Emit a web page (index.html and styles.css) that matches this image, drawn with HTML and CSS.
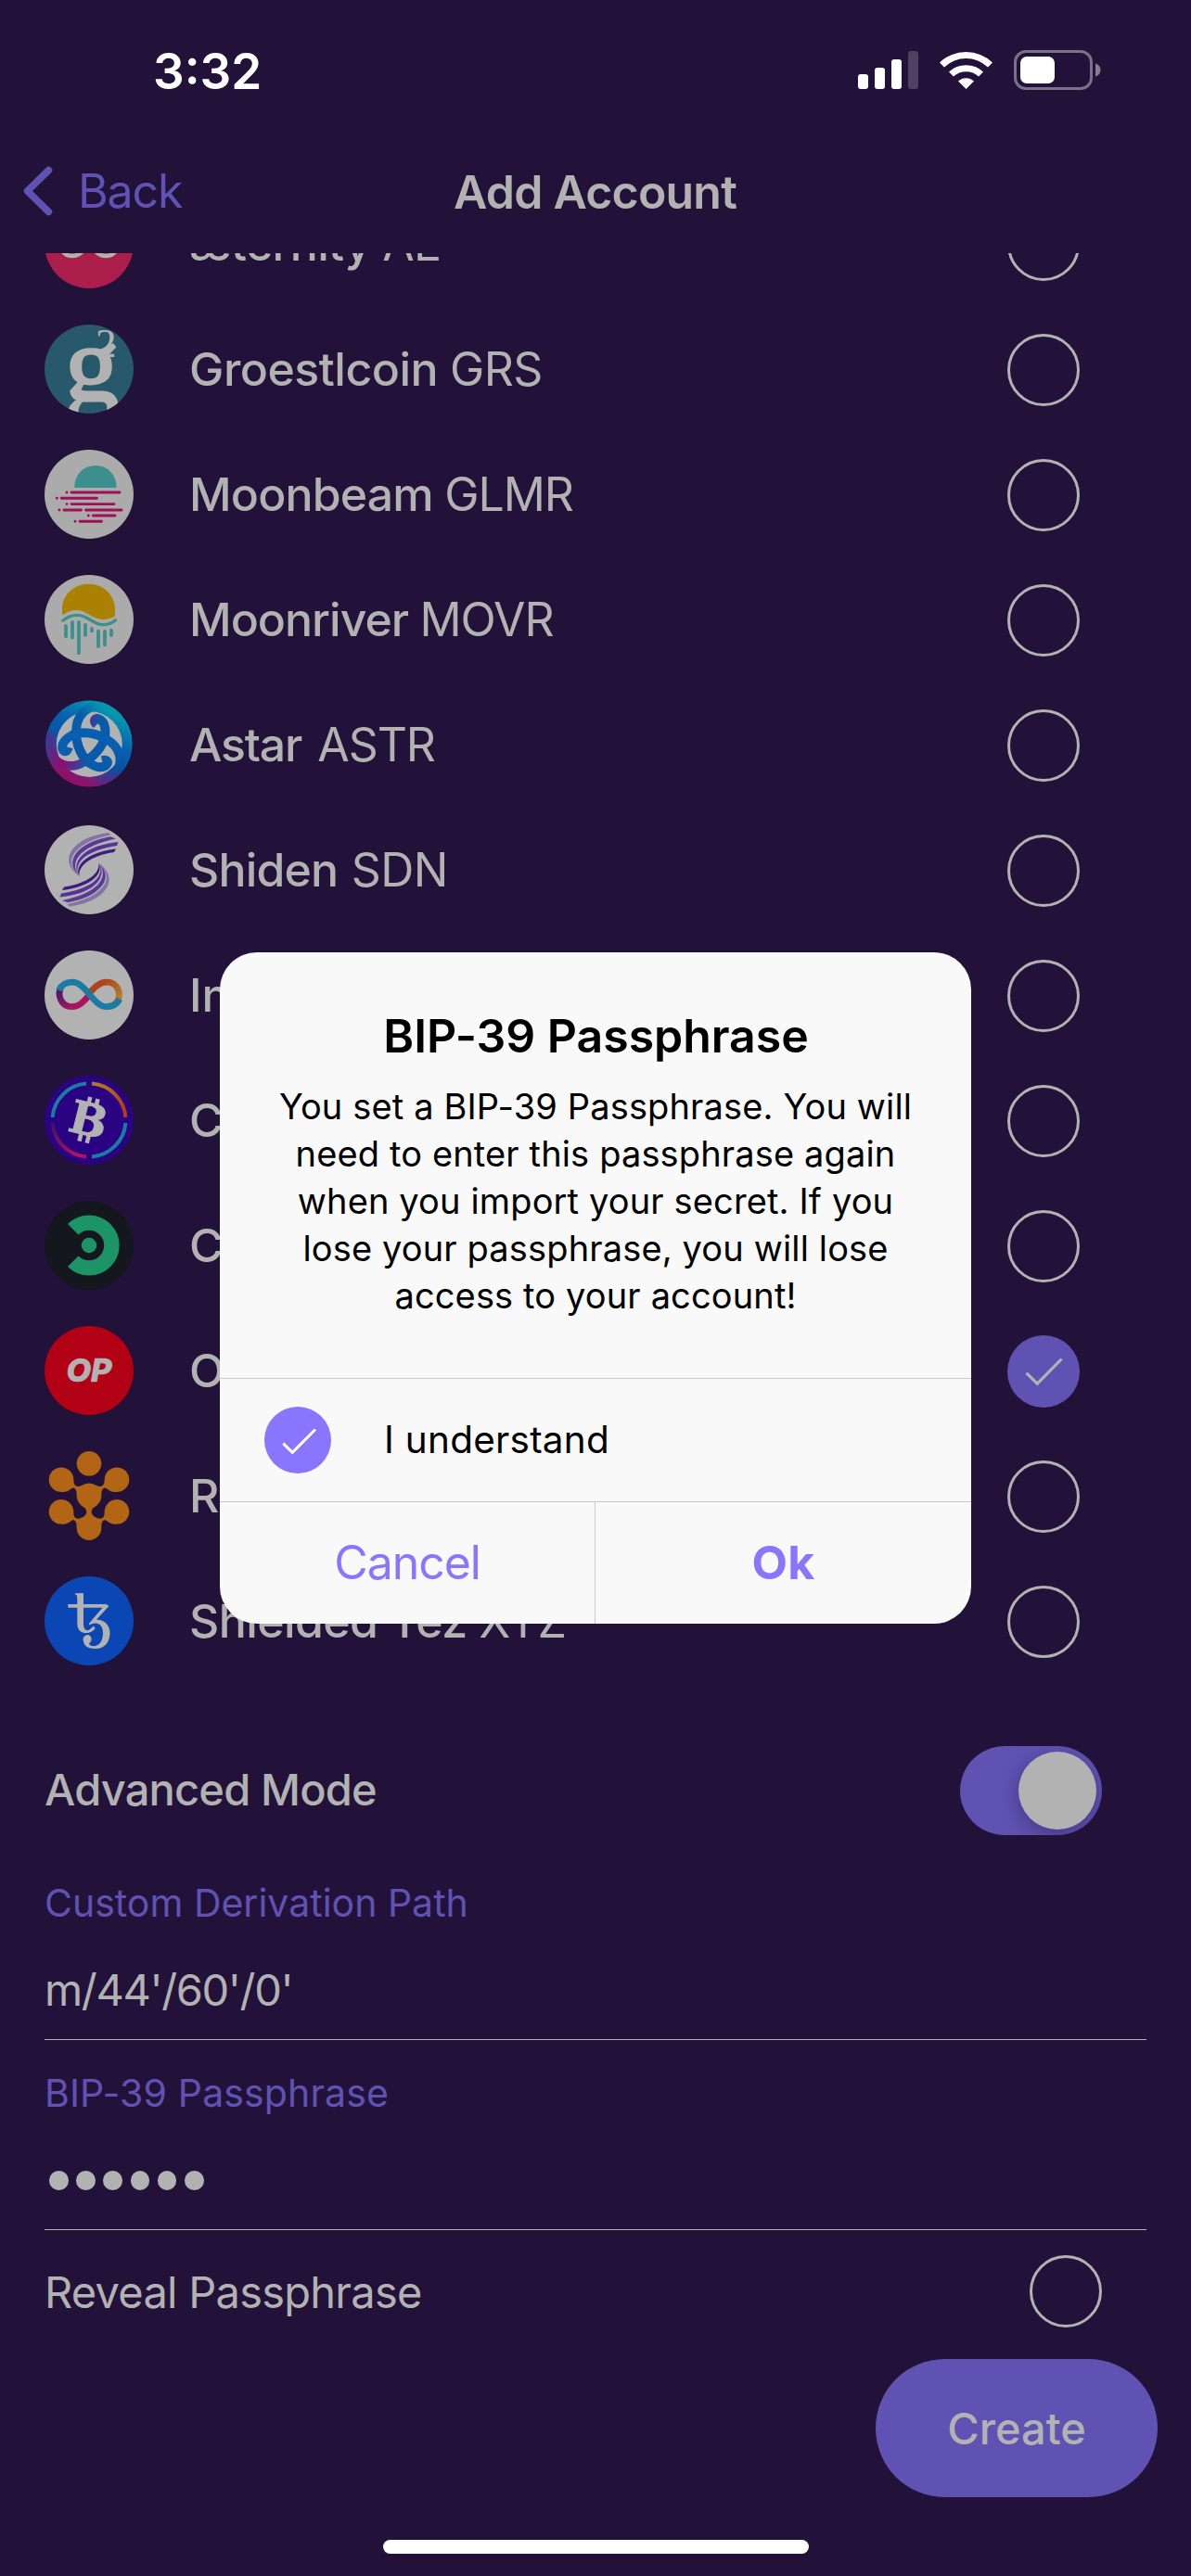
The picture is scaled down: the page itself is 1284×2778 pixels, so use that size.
FILE: index.html
```html
<!DOCTYPE html>
<html lang="en">
<head>
<meta charset="utf-8">
<title>Add Account</title>
<link rel="stylesheet" href="styles.css">
</head>
<body>
<div class="screen">
  <header class="status">
    <span class="clock">3:32</span>
    <svg class="indicators" viewBox="0 0 264 46" width="264" height="46">
      <g fill="#fff">
        <rect x="0" y="27" width="11" height="16" rx="3"/>
        <rect x="18" y="20" width="11" height="23" rx="3"/>
        <rect x="36" y="11" width="11" height="32" rx="3"/>
        <rect x="54" y="2" width="11" height="41" rx="3" opacity=".2"/>
      </g>
      <g fill="#fff">
        <path d="M88 14.5A41 41 0 0 1 145 14.5L140 19.5A34 34 0 0 0 93 19.5Z"/>
        <path d="M98 24.5A27 27 0 0 1 135 24.5L130 29.5A20 20 0 0 0 103 29.5Z"/>
        <path d="M116.500 43L108 34.500A12.500 12.500 0 0 1 125 34.500Z"/>
      </g>
      <rect x="169.500" y="2.500" width="82" height="40" rx="11.500" fill="none" stroke="#fff" stroke-width="3" opacity=".4"/>
      <rect x="175" y="8" width="37" height="29" rx="7" fill="#fff"/>
      <path d="M256 15.500C260 17 261.500 19.500 261.500 22.500S260 28 256 29.500Z" fill="#fff" opacity=".45"/>
    </svg>
  </header>

  <nav class="nav">
    <a class="back"><svg class="chevron" viewBox="0 0 32 54" width="32" height="54"><path d="M27.500 4.500L4.500 27L27.500 49.500" fill="none" stroke="#6052b2" stroke-width="7.500" stroke-linecap="round" stroke-linejoin="round"/></svg><span>Back</span></a>
    <h1 class="title">Add Account</h1>
  </nav>

  <main class="content">
    <ul class="coins">
      <li class="coin">
        <svg class="logo" viewBox="0 0 96 96"><circle cx="48" cy="48" r="48" fill="#ab1e4c"/><path d="M48 48C42 55 38 61 30 61C22 61 17 55 17 48S22 35 30 35C38 35 42 41 48 48C54 55 58 61 66 61C74 61 79 55 79 48S74 35 66 35C58 35 54 41 48 48Z" fill="none" stroke="#b2b2b2" stroke-width="4.500"/></svg>
        <span class="name n-ae">æternity <em>AE</em></span><i class="radio"></i>
      </li>
      <li class="coin">
        <svg class="logo" viewBox="0 0 96 96"><defs><clipPath id="disc"><circle cx="48" cy="48" r="48"/></clipPath></defs><circle cx="48" cy="48" r="48" fill="#27596b"/><g clip-path="url(#disc)" fill="#b2b2b2"><text class="g-mark" x="22" y="82">g</text><text class="two-mark" x="55" y="35">2</text></g></svg>
        <span class="name n-grs">Groestlcoin <em>GRS</em></span><i class="radio"></i>
      </li>
      <li class="coin">
        <svg class="logo" viewBox="0 0 96 96"><circle cx="48" cy="48" r="48" fill="#ababab"/><path d="M33.500 41Q32.300 41 32.300 39.500A22.600 22.600 0 0 1 77.500 39.500Q77.500 41 76.500 41Z" fill="#3d8f8d"/><path d="M24 46h.01M29 46H81M13.300 52.300h.01M18.200 52.300H56.500M24 58.600h.01M29 58.600H75M16 65h.01M21 65H39.500M44.500 65H83M47.300 71h.01M52.300 71H76M33 77.300h.01M38 77.300H61.500" stroke="#9f0f5a" stroke-width="2.900" stroke-linecap="round"/></svg>
        <span class="name n-long">Moonbeam <em class="glmr">GLMR</em></span><i class="radio"></i>
      </li>
      <li class="coin">
        <svg class="logo" viewBox="0 0 96 96"><circle cx="48" cy="48" r="48" fill="#ababab"/><path d="M19.500 43.500C19 41 19 39 19 37C19 21 32 9.700 47.500 9.700S76 21 76 37V44.300C70 48.500 62 49.500 54 46C47 43 43 38 34 38C28 38 23 40.500 19.500 43.500Z" fill="#ab8103"/><g fill="none" stroke="#3d8f8d" stroke-linecap="round"><path d="M19.700 49.300C25 45 30 43.300 35 43.300C48 43.500 51 53.500 63 53.700C68 53.700 73 52 76.500 48.800" stroke-width="3.200"/><path d="M23 55V66.300M30 51V67.500M37 51V84.200M44 54V64.800M51 58V60.300M58 60.700V77M65 61V75.300M72 59.700V65" stroke-width="3.800"/></g></svg>
        <span class="name n-river">Moonriver <em class="movr">MOVR</em></span><i class="radio"></i>
      </li>
      <li class="coin">
        <svg class="logo" viewBox="0 0 96 96">
          <defs>
            <clipPath id="round"><circle cx="48" cy="47" r="46.800"/></clipPath>
            <linearGradient id="ring" x1=".3" y1="1" x2=".8" y2=".1"><stop offset="0" stop-color="#a3055c"/><stop offset=".18" stop-color="#7a1d75"/><stop offset=".42" stop-color="#0854a6"/><stop offset=".65" stop-color="#075fae"/><stop offset="1" stop-color="#069faf"/></linearGradient>
            <linearGradient id="armA" gradientUnits="userSpaceOnUse" x1="90" y1="5" x2="50" y2="32"><stop offset="0" stop-color="#069faf"/><stop offset=".55" stop-color="#0691ab"/><stop offset="1" stop-color="#085bab"/></linearGradient>
            <linearGradient id="armB" gradientUnits="userSpaceOnUse" x1="90" y1="5" x2="50" y2="32"><stop offset=".2" stop-color="#8c1270"/><stop offset=".6" stop-color="#0950a0"/><stop offset="1" stop-color="#085fb0"/></linearGradient>
            <linearGradient id="armC" gradientUnits="userSpaceOnUse" x1="90" y1="5" x2="44" y2="48"><stop offset=".1" stop-color="#0854a6"/><stop offset=".35" stop-color="#5a2a8c"/><stop offset=".6" stop-color="#8c0f6b"/><stop offset=".85" stop-color="#4b3592"/><stop offset="1" stop-color="#085bab"/></linearGradient>
          </defs>
          <g clip-path="url(#round)">
            <circle cx="48" cy="47" r="46.800" fill="url(#ring)"/>
            <circle cx="48.300" cy="47.500" r="35.500" fill="#b2b2b2"/>
            <g fill="none" stroke-width="9.800">
              <path d="M80 18C72 8 64 5.500 55.300 6.700C44 8.500 34 17 34 34C34 50 41 63 49 68.300C55 72 62 74.500 67 69.500C69 67 68 63.500 62 65" stroke="url(#armA)"/>
              <path d="M80 18C72 8 64 5.500 55.300 6.700C44 8.500 34 17 34 34C34 50 41 63 49 68.300C55 72 62 74.500 67 69.500C69 67 68 63.500 62 65" stroke="url(#armC)" transform="rotate(-120 48 47.500)"/>
              <path d="M80 18C72 8 64 5.500 55.300 6.700C44 8.500 34 17 34 34C34 50 41 63 49 68.300C55 72 62 74.500 67 69.500C69 67 68 63.500 62 65" stroke="url(#armB)" transform="rotate(120 48 47.500)"/>
              <path d="M35 44C37 53 39 57 43 62" stroke="#0859aa"/>
            </g>
          </g>
        </svg>
        <span class="name n-astar">Astar <em class="astr">ASTR</em></span><i class="radio"></i>
      </li>
      <li class="coin">
        <svg class="logo" viewBox="0 0 96 96"><defs><g id="wing"><path d="M69 8C33 12 13 36 36.500 54C19 37 34 18 71.500 10.500Z" fill="#8474a5"/><path d="M71 12.300C38 18 20 37 36.500 54C26 38 40 22 77 14.500Z" fill="#5a3a96"/><path d="M79.500 18C48 21 27 36 36.800 54.500C31 39 46 27 78 22Z" fill="#563493"/><path d="M77 25.500C51 28 31 41 37.500 55.500C36 43 50 33 75 29Z" fill="#3c1e80"/></g></defs><circle cx="48" cy="48" r="48" fill="#b2b2b2"/><use href="#wing"/><use href="#wing" transform="rotate(180 48 47.800)"/></svg>
        <span class="name n-long">Shiden <em class="sdn">SDN</em></span><i class="radio"></i>
      </li>
      <li class="coin">
        <svg class="logo" viewBox="0 0 96 96">
          <defs>
            <linearGradient id="pink" gradientUnits="userSpaceOnUse" x1="16" y1="38" x2="32" y2="62"><stop offset="0" stop-color="#3d1a66"/><stop offset="1" stop-color="#ab1560"/></linearGradient>
            <linearGradient id="sun" gradientUnits="userSpaceOnUse" x1="60" y1="38" x2="80" y2="54"><stop offset="0" stop-color="#ad441b"/><stop offset="1" stop-color="#b58029"/></linearGradient>
          </defs>
          <circle cx="48" cy="48" r="48" fill="#b2b2b2"/>
          <g fill="none" stroke-width="6.800">
            <path d="M18 39C13.500 47 17 60.700 30 60.700C38 60.700 43 54 48 48.500" stroke="url(#pink)"/>
            <path d="M48 46.500C53.500 40 59 34.200 67 34.200C76 34.200 80.500 41 80.500 47.500C80.500 54 76 60 68 60.700" stroke="url(#sun)"/>
            <path d="M15.500 43C18 37 23 34.200 30 34.200C45 34.200 52 60.700 67 60.700C73 60.700 78 58 81 52.500" stroke="#1b7ba3"/>
          </g>
        </svg>
        <span class="name">Internet Computer <em>ICP</em></span><i class="radio"></i>
      </li>
      <li class="coin">
        <svg class="logo" viewBox="0 0 96 96">
          <defs>
            <linearGradient id="amber" x1="0" y1="0" x2="1" y2="1"><stop offset=".1" stop-color="#b57a25"/><stop offset=".8" stop-color="#b03f17"/></linearGradient>
            <linearGradient id="wine" x1="0" y1="0" x2="1" y2="1"><stop offset="0" stop-color="#3d1466"/><stop offset=".8" stop-color="#ad1560"/></linearGradient>
          </defs>
          <circle cx="48" cy="48" r="48" fill="#2a0383"/>
          <g fill="none" stroke-width="4">
            <path d="M8.600 45A39.500 39.500 0 0 1 45 8.600M51 87.400A39.500 39.500 0 0 0 87.400 51" stroke="#1b7ba3"/>
            <path d="M51 8.600A39.500 39.500 0 0 1 87.400 45" stroke="url(#amber)"/>
            <path d="M8.600 51A39.500 39.500 0 0 0 45 87.400" stroke="url(#wine)"/>
          </g>
          <g transform="rotate(14 48 48)" fill="#b2b2b2"><text class="btc-mark" x="47.500" y="64.500">B</text><rect x="41" y="23.500" width="4.500" height="10"/><rect x="49.500" y="23.500" width="4.500" height="10"/><rect x="41" y="62" width="4.500" height="10.500"/><rect x="49.500" y="62" width="4.500" height="10.500"/></g>
        </svg>
        <span class="name">Chain Key Bitcoin <em>ckBTC</em></span><i class="radio"></i>
      </li>
      <li class="coin">
        <svg class="logo" viewBox="0 0 96 96"><circle cx="48" cy="48" r="48" fill="#14171e"/><path d="M30.750 30.750A24.400 24.400 0 1 1 30.750 65.250" fill="none" stroke="#1c9468" stroke-width="16.400"/><circle cx="48" cy="48" r="8.200" fill="#1c9468"/></svg>
        <span class="name">Coreum <em>CORE</em></span><i class="radio"></i>
      </li>
      <li class="coin">
        <svg class="logo" viewBox="0 0 96 96"><circle cx="48" cy="48" r="48" fill="#b20014"/><text class="op-mark" x="48" y="60.300">OP</text></svg>
        <span class="name">Optimism <em>OP</em></span>
        <svg class="check" viewBox="0 0 78 78"><circle cx="39" cy="39" r="39" fill="#6052b2"/><path d="M20.500 40.700L32.300 52.200L58.500 25.500" fill="none" stroke="#b2b2b2" stroke-width="3.200"/></svg>
      </li>
      <li class="coin">
        <svg class="logo" viewBox="0 0 96 96"><defs><path id="bridge" d="M31.200 30.700C31.200 37 35 39.500 40 37L48 34.500L56 37C61 39.500 64.800 37 64.800 30.700L78 44C70 44 69 41.500 66.500 40C63 38 61.200 42 61.200 48H34.800C34.800 42 33 38 29.500 40C27 41.500 26 44 18 44Z"/></defs><g fill="#b16515"><circle cx="48" cy="13.300" r="13.300"/><circle cx="18" cy="30.700" r="13.300"/><circle cx="78" cy="30.700" r="13.300"/><circle cx="48" cy="48" r="13.300"/><circle cx="18" cy="65.300" r="13.300"/><circle cx="78" cy="65.300" r="13.300"/><circle cx="48" cy="82.700" r="13.300"/><use href="#bridge"/><path d="M31.200 65.300C31.200 71 33 73.500 38 72.500C42 71.500 45.300 69 45.300 65.300C45.300 62 42.500 60.500 39.500 58L56.500 58C53.500 60.500 50.700 62 50.700 65.300C50.700 69 54 71.500 58 72.500C63 73.500 64.800 71 64.800 65.300L78 78.600C70 78.600 69 76 66.500 74.700C63 72.700 61.200 77 61.200 82.700H34.800C34.800 77 33 72.700 29.500 74.700C27 76 26 78.600 18 78.600Z"/></g></svg>
        <span class="name">Rootstock <em>RBTC</em></span><i class="radio"></i>
      </li>
      <li class="coin">
        <svg class="logo" viewBox="0 0 96 96"><circle cx="48" cy="48" r="48" fill="#0a46b4"/><g fill="#b2b2b2"><path d="M33 18.300L42 18V51C42 58 46 60 49.500 56.500L53 53.500L54.500 56C51 61 46 61.500 43 61C37.500 60 35.300 56 35.300 51V25C35.300 21 35 19.800 33 19.800Z"/><path d="M25.300 30H66.500L69.500 32L56 46.500C66 47 71 54 70.500 62C70 72 64 78 55 78C47 78 42 74.500 42 69.500A4.500 4.500 0 1 1 50.500 68.500C50.200 71 47.500 71.500 48.500 73.500C50 76 62 78 63 62C63.500 51 55.500 48 48.500 52.500L47.800 51L62.500 33.700H25.300Z"/></g></svg>
        <span class="name n-tez">Shielded Tez <em>XTZ</em></span><i class="radio"></i>
      </li>
    </ul>

    <section class="advanced">
      <div class="mode"><span class="mode-label">Advanced Mode</span><div class="toggle"><i class="knob"></i></div></div>
      <div class="field first"><label class="label">Custom Derivation Path</label><div class="value path">m/44'/60'/0'</div></div>
      <div class="field"><label class="label bip">BIP-39 Passphrase</label><div class="value dots"><i></i><i></i><i></i><i></i><i></i><i></i></div></div>
      <div class="reveal"><span>Reveal Passphrase</span><i class="radio"></i></div>
    </section>
    <button class="create">Create</button>
    <div class="home"></div>
  </main>

  <div class="dialog">
    <div class="message">
      <h2 class="heading">BIP-39 Passphrase</h2>
      <p class="text">You set a BIP-39 Passphrase. You will<br>need to enter this passphrase again<br>when you import your secret. If you<br>lose your passphrase, you will lose<br>access to your account!</p>
    </div>
    <div class="agree">
      <svg class="agree-check" viewBox="0 0 72 72"><circle cx="36" cy="36" r="36" fill="#8a75ff"/><path d="M20.300 39.700L30.300 49.300L55 24.500" fill="none" stroke="#fff" stroke-width="3"/></svg>
      <span>I understand</span>
    </div>
    <div class="actions"><button class="action cancel">Cancel</button><button class="action ok">Ok</button></div>
  </div>
</div>
</body>
</html>
```
FILE: styles.css
```css
* { box-sizing: border-box; }
body { margin: 0; background: #22123a; font-family: Inter, "Liberation Sans", sans-serif; color: #b2b2b2; }
h1, h2, p, ul { margin: 0; padding: 0; }
ul { list-style: none; }
button { border: 0; padding: 0; background: none; font-family: inherit; }
svg { display: block; flex: none; }

.screen { position: relative; width: 1284px; height: 2778px; overflow: hidden; display: flex; flex-direction: column; }

.status { height: 141px; flex: none; display: flex; justify-content: space-between; align-items: flex-start; padding: 53px 95px 0 165px; }
.clock { font-size: 53px; font-weight: 600; line-height: 49px; color: #fff; }

.nav { height: 132px; flex: none; display: grid; grid-template-columns: 1fr auto 1fr; align-items: start; padding: 38px 0 0 25px; }
.back { display: flex; gap: 27px; color: #6052b2; font-size: 50px; line-height: 54px; letter-spacing: -1.15px; }
.title { font-size: 50px; font-weight: 600; line-height: 56px; letter-spacing: -.8px; margin-left: -26px; }

.content { flex: 1; overflow: hidden; display: flex; flex-direction: column; }
.coins { margin-top: -77px; }
.coin { height: 135px; padding: 19px 120px 0 48px; display: flex; align-items: flex-start; }
.logo { width: 96px; height: 96px; margin-right: 60px; }
.name { flex: 1; font-size: 50px; font-weight: 500; line-height: 96px; white-space: nowrap; }
.name em { font-style: normal; font-weight: 400; letter-spacing: -.6px; }
.name .glmr { letter-spacing: -1.1px; }
.name .movr { letter-spacing: -1.1px; }
.name .astr { letter-spacing: -1.1px; margin-left: 5px; }
.name .sdn { margin-left: 2px; }
.n-ae { letter-spacing: -.7px; }
.n-grs { letter-spacing: -.5px; }
.n-long { letter-spacing: -.85px; }
.n-river { letter-spacing: -1px; }
.n-astar { letter-spacing: -1.2px; }
.n-tez { letter-spacing: -.6px; }
.radio { width: 78px; height: 78px; flex: none; border: 3px solid #b2b2b2; border-radius: 50%; }
.check { width: 78px; height: 78px; }
.coin .radio, .check { margin-top: 10px; }

.g-mark { font: 116px "Liberation Serif", serif; stroke: #b2b2b2; stroke-width: 3; }
.two-mark { font: 45px "Liberation Serif", serif; }
.btc-mark { font: bold 48px "DejaVu Serif", serif; text-anchor: middle; stroke: #b2b2b2; stroke-width: 1; }
.op-mark { font: italic 800 34.500px Inter, sans-serif; text-anchor: middle; fill: #b2b2b2; stroke: #b2b2b2; stroke-width: .7; }

.advanced { padding: 67px 48px 0; }
.mode { display: flex; justify-content: space-between; padding-right: 48px; }
.mode-label { font-size: 47px; font-weight: 500; letter-spacing: -.8px; line-height: 94px; }
.toggle { width: 153px; height: 96px; border-radius: 48px; background: #6052b2; display: flex; justify-content: flex-end; padding: 6px; overflow: hidden; }
.knob { width: 84px; height: 84px; border-radius: 50%; background: #b2b2b2; box-shadow: 0 6px 22px rgba(20, 10, 50, .35); }
.field { margin-top: 32px; border-bottom: 1px solid #b2b2b2; }
.field.first { margin-top: 48px; }
.label { display: block; font-size: 41px; line-height: 50px; color: #6052b2; }
.label.bip { letter-spacing: .14px; }
.value { height: 122px; padding-top: 39px; font-size: 47px; line-height: 60px; }
.path { letter-spacing: -1.35px; }
.dots { display: flex; align-items: flex-start; gap: 8.500px; padding: 59px 0 0 5px; }
.dots i { width: 20.700px; height: 20.700px; border-radius: 50%; background: #b2b2b2; }
.reveal { height: 78px; margin-top: 27px; padding-right: 48px; display: flex; justify-content: space-between; font-size: 47px; letter-spacing: -.74px; line-height: 80px; }
.create { align-self: flex-end; flex: none; width: 304px; height: 149px; margin: 34px 36px 0 0; border-radius: 75px; background: #6052b2; color: #b2b2b2; font-size: 47px; font-weight: 500; }
.home { align-self: center; flex: none; width: 459px; height: 15px; margin-top: 46px; border-radius: 8px; background: #fff; }

.dialog { position: absolute; left: 237px; top: 1027px; width: 810px; height: 724px; border-radius: 40px; background: #f9f9f9; color: #000; overflow: hidden; display: flex; flex-direction: column; }
.message { height: 459px; padding-top: 60px; text-align: center; }
.heading { font-size: 50px; font-weight: 600; line-height: 60px; letter-spacing: -.05px; padding-left: 1px; }
.text { margin-top: 21px; font-size: 38px; line-height: 51px; letter-spacing: .14px; }
.agree { height: 133px; border-top: 1px solid #c8c8ca; display: flex; align-items: flex-start; gap: 57px; padding: 30px 0 0 48px; font-size: 40.500px; letter-spacing: .25px; line-height: 72px; }
.agree-check { width: 72px; height: 72px; }
.actions { flex: 1; border-top: 1px solid #c8c8ca; display: flex; }
.action { width: 405px; flex: none; font-size: 50px; color: #8a75ff; padding-bottom: 2px; }
.cancel { border-right: 1px solid #c8c8ca; letter-spacing: -1.070px; }
.ok { font-weight: 700; letter-spacing: .3px; }
```
